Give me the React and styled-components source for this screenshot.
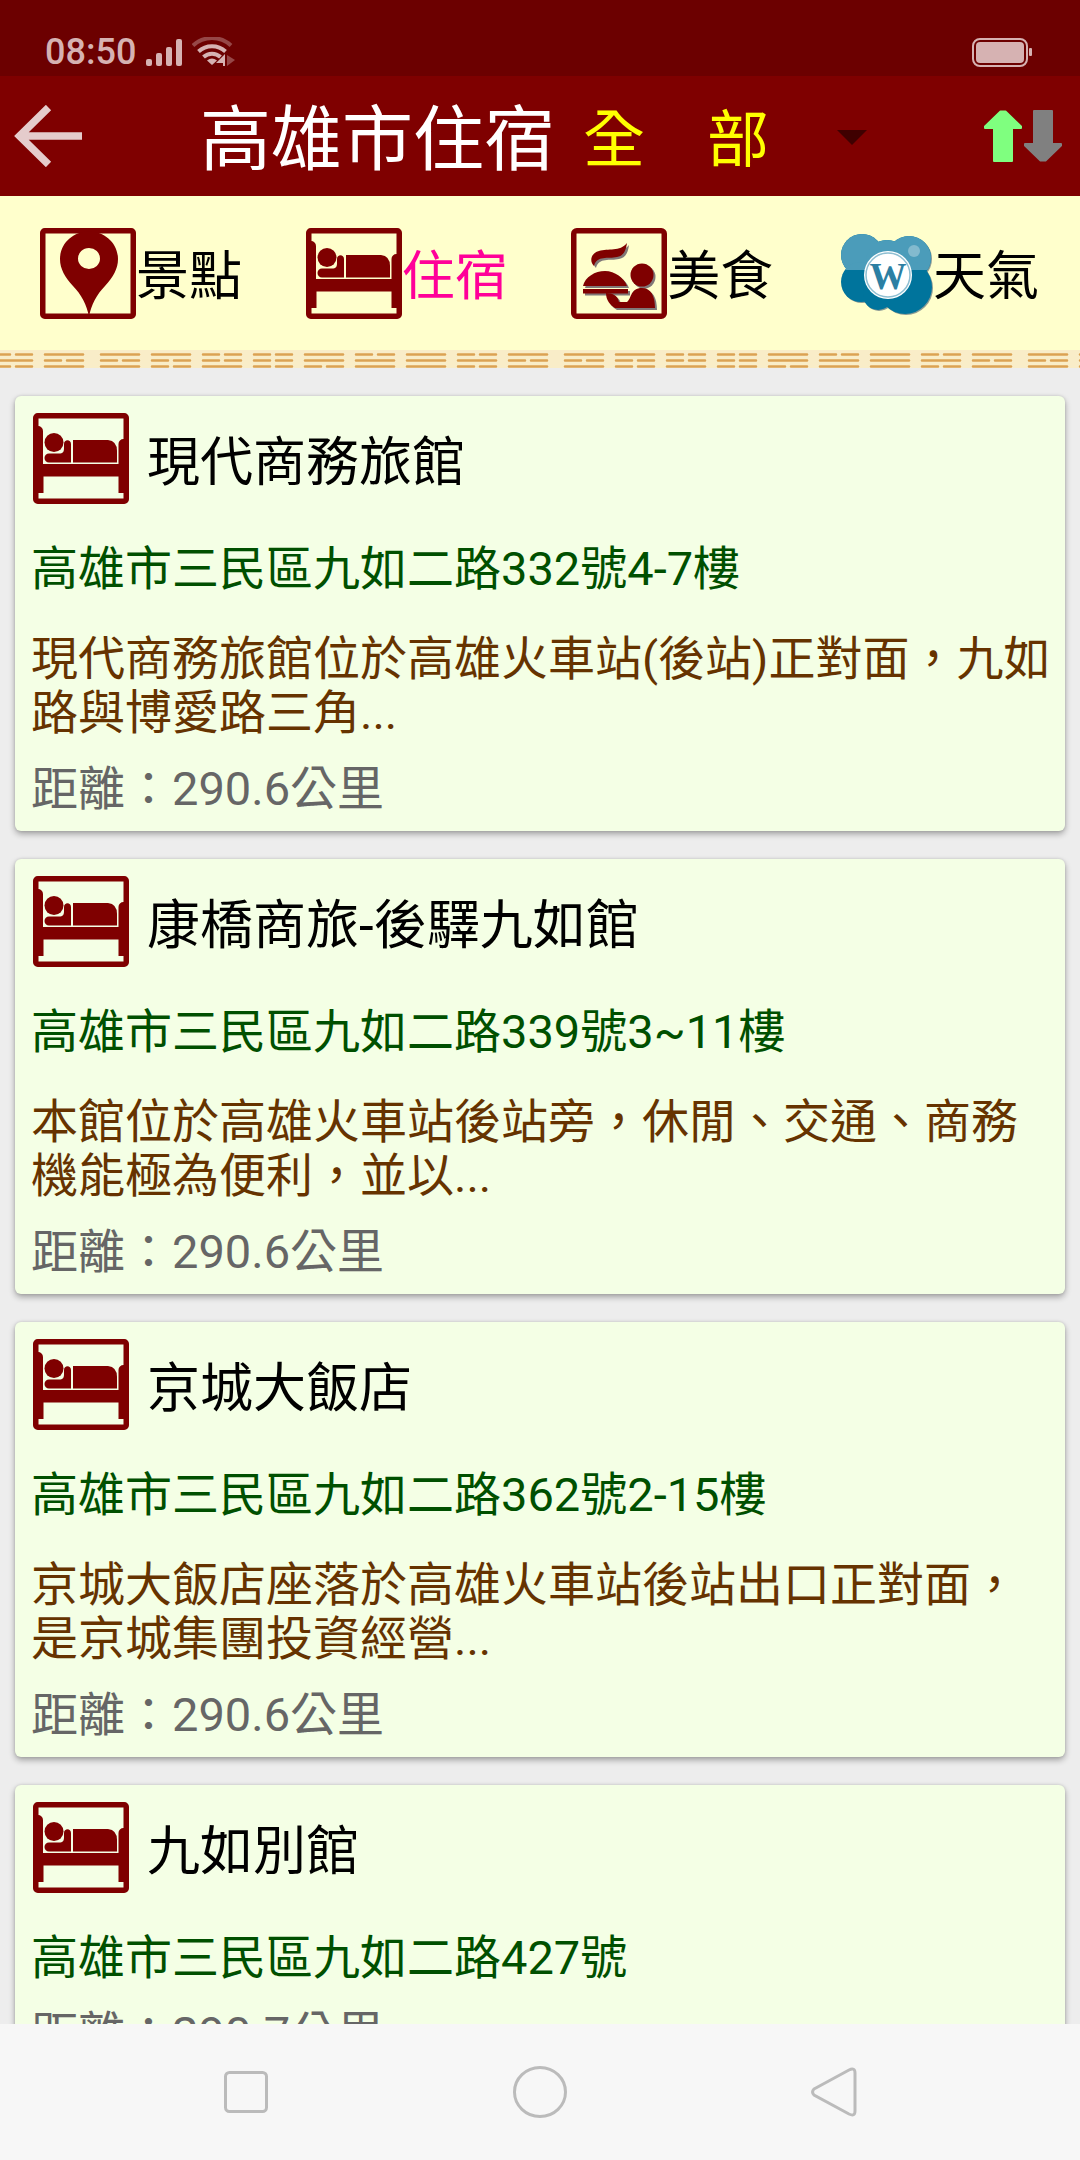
import React, { useState } from 'react';
import styled, { createGlobalStyle } from 'styled-components';

const GlobalStyle = createGlobalStyle`
  * {
    box-sizing: border-box;
  }

  body {
    margin: 0;
    background-color: #ededed;
    font-family: Roboto, 'Noto Sans CJK TC', sans-serif;
  }

  svg {
    display: block;
    flex-shrink: 0;
  }
`;

const Screen = styled.div`
  height: 100vh;
  display: flex;
  flex-direction: column;
`;

const StatusBar = styled.div`
  background-color: #6c0000;
  color: #d6b2b2;
  height: 76px;
  display: flex;
  justify-content: space-between;
  align-items: flex-end;
  padding: 0 48px 2px 45px;
`;

const StatusGroup = styled.div`
  display: flex;
  align-items: center;
  gap: 10px;
  height: 44px;
`;

const Clock = styled.span`
  font-size: 36px;
  font-weight: 500;
  line-height: 44px;
`;

const Toolbar = styled.header`
  background-color: #7f0000;
  color: #fff;
  height: 120px;
  display: flex;
  align-items: center;
  padding: 0 18px 0 14px;
`;

const IconButton = styled.button`
  background: none;
  border: none;
  padding: 0;
  cursor: pointer;
`;

const Title = styled.h1`
  font-size: 71px;
  font-weight: 400;
  line-height: 84px;
  margin: 0 28px 0 118px;
  padding-top: 8px;
`;

const AreaPicker = styled.div`
  position: relative;
  width: 284px;
`;

const AreaSelect = styled.select`
  appearance: none;
  background: none;
  border: none;
  outline: none;
  padding: 8px 0 0;
  width: 100%;
  height: 84px;
  color: #ffff00;
  font-family: inherit;
  font-size: 62px;

  option {
    background-color: #7f0000;
  }
`;

const Caret = styled.svg`
  position: absolute;
  right: 0;
  top: 36px;
  pointer-events: none;
`;

const SortButton = styled(IconButton)`
  display: flex;
  gap: 2px;
  margin-left: auto;
`;

const Nav = styled.nav`
  background-color: #ffffcc;
  height: 154px;
  display: flex;
  justify-content: space-between;
  align-items: center;
  padding: 0 41px 0 40px;
`;

const NavLink = styled.a`
  display: flex;
  align-items: center;
  color: ${props => (props.$active ? '#ff0099' : '#000')};
  font-size: 53px;
  line-height: 64px;
  text-decoration: none;
`;

const NavLabel = styled.span`
  padding-top: 8px;
`;

const HotelList = styled.main`
  flex: 1;
  min-height: 0;
  overflow-y: auto;
  scrollbar-width: none;
  display: flex;
  flex-direction: column;
  gap: 28px;
  padding: 28px 15px;
`;

const Card = styled.article`
  flex-shrink: 0;
  background-color: #f4ffe5;
  border-radius: 6px;
  box-shadow: 0 3px 6px rgba(0, 0, 0, 0.32), 0 0 3px rgba(0, 0, 0, 0.12);
  padding: 17px 14px 15px 16px;
`;

const CardHeader = styled.div`
  display: flex;
  align-items: center;
  gap: 18px;
  padding-left: 2px;
`;

const HotelName = styled.h2`
  margin: 0;
  padding-top: 8px;
  color: #000;
  font-size: 53px;
  font-weight: 400;
  line-height: 64px;
`;

const CardText = styled.p`
  margin: ${props => props.$gap}px 0 0;
  color: ${props => props.$color};
  font-size: 47px;
  line-height: 54px;
`;

const BottomBar = styled.footer`
  background-color: #f7f7f7;
  height: 136px;
  display: grid;
  grid-template-columns: repeat(3, 1fr);
  align-items: center;
  justify-items: center;
  padding: 0 99px;
`;

const SignalIcon = () => (
  <svg width="36" height="27" viewBox="0 0 36 27" fill="currentColor">
    <rect x="0" y="20" width="6" height="7" rx="2" />
    <rect x="10" y="14" width="6" height="13" rx="2" />
    <rect x="20" y="8" width="6" height="19" rx="2" />
    <rect x="30" y="0" width="6" height="27" rx="2" />
  </svg>
);

const WifiIcon = () => (
  <svg width="44" height="30" viewBox="0 0 44 30" fill="none" stroke="currentColor">
    <path d="M1 8.5a28 28 0 0 1 38 0" strokeWidth="4" opacity="0.4" />
    <path d="M6.5 14.5a20 20 0 0 1 27 0" strokeWidth="4" />
    <path d="M11.500 20a12.500 12.500 0 0 1 17 0" strokeWidth="4" />
    <path d="M15 23.500q5-4 10 0l-5 4.500z" fill="currentColor" stroke="none" />
    <path d="M33 17v12h-2v-3h-7z" fill="currentColor" stroke="none" />
    <path d="M35 18l8 5-8 6z" fill="currentColor" stroke="none" opacity="0.4" />
  </svg>
);

const BatteryIcon = () => (
  <svg width="60" height="29" viewBox="0 0 60 29" fill="none">
    <rect x="1" y="1" width="54" height="27" rx="7" stroke="currentColor" strokeWidth="2" />
    <rect x="4" y="4" width="48" height="21" rx="4" fill="currentColor" />
    <rect x="57" y="10" width="3" height="8" rx="1" fill="currentColor" />
  </svg>
);

const BackArrowIcon = () => (
  <svg width="68" height="62" viewBox="0 0 68 62" fill="none" stroke="#e5cccc" strokeWidth="7.500">
    <path d="M34.500 2.500L5.500 31l29 28.500M7 31h61" />
  </svg>
);

const ArrowIcon = ({ color, down }) => (
  <svg width="38" height="52" viewBox="0 0 38 52" fill={color} stroke={color} strokeWidth="2" strokeLinejoin="round">
    <path
      d="M16.500 1.500h5L37 16.500v1.500h-9v33H10V18H1v-1.500z"
      transform={down ? 'rotate(180 19 26)' : undefined}
    />
  </svg>
);

const PinIcon = () => (
  <svg width="96" height="91" viewBox="0 0 96 91">
    <rect x="2.750" y="2.750" width="90.500" height="85.500" rx="2" fill="none" stroke="#7f0000" strokeWidth="5.500" />
    <path
      fill="#7f0000"
      fillRule="evenodd"
      d="M49 3.500c16 0 29 12 29 27.500 0 10-5 18-13 27-8 8-14 19-16 31-2-12-8-23-16-31-8-9-13-17-13-27C20 15.500 33 3.500 49 3.500zM49 20a11 10.500 0 1 0 0 21 11 10.500 0 1 0 0-21z"
    />
  </svg>
);

const BedIcon = () => (
  <svg width="96" height="91" viewBox="0 0 96 91" fill="#7f0000">
    <rect x="2.750" y="2.750" width="90.500" height="85.500" rx="2" fill="none" stroke="#7f0000" strokeWidth="5.500" />
    <path d="M0 13h5a5 5 0 0 1 5 5v33h75.500V31a5 5 0 0 1 5-5H96v54H85.500V63.500H10.500V80H0z" />
    <circle cx="21" cy="29.500" r="9.500" />
    <path d="M38 49.500H16a4.500 4.500 0 0 1 0-9h10c4 0 5-2 5-5V31c0-5 7-5 7 0z" />
    <path d="M40 27h35q9 1 9 11v11.500H40z" />
  </svg>
);

const DiningShapes = () => (
  <>
    <path d="M23 38c-5-5-3-13 5-15 9-3 21 1 28-8-1 7-3 13-10 14-9 2-20-2-23 9z" />
    <path d="M12 58c2-9 12-15 22-15s19 7 22 15z" />
    <path d="M12 61h45v4.500H12z" />
    <circle cx="71" cy="47" r="11.500" />
    <path d="M35 65c7 0 12 3 13 9h8c5-4 3-14 15-14 9 0 13 8 13 20H44c-5-3-9-8-9-15z" />
  </>
);

const DiningIcon = () => (
  <svg width="96" height="91" viewBox="0 0 96 91">
    <rect x="2.750" y="2.750" width="90.500" height="85.500" rx="3" fill="none" stroke="#7f0000" strokeWidth="5.500" />
    <g fill="#807878" transform="translate(2 2)">
      <DiningShapes />
    </g>
    <g fill="#7f0000">
      <DiningShapes />
    </g>
  </svg>
);

const CloudShapes = () => (
  <>
    <circle cx="25" cy="27" r="21" />
    <circle cx="50" cy="33" r="21" />
    <circle cx="72" cy="30" r="22" />
    <circle cx="24" cy="54" r="20" />
    <circle cx="41" cy="67" r="15" />
    <circle cx="68" cy="59" r="27" />
  </>
);

const WeatherIcon = () => (
  <svg width="96" height="91" viewBox="0 0 96 91">
    <defs>
      <clipPath id="cloud-top">
        <rect width="96" height="42" />
      </clipPath>
    </defs>
    <g fill="#8d9b94" transform="translate(1 1)">
      <CloudShapes />
    </g>
    <g fill="#00749c">
      <CloudShapes />
    </g>
    <g fill="#4b9cba" clipPath="url(#cloud-top)">
      <CloudShapes />
    </g>
    <circle cx="77" cy="23" r="6" fill="#83bace" />
    <circle cx="51" cy="47" r="24" fill="#fff" />
    <circle cx="51" cy="47" r="22" fill="none" stroke="#8fbfd2" strokeWidth="1.500" />
    <text
      x="51"
      y="61"
      fill="#2b7fa3"
      fontFamily="'Liberation Serif', serif"
      fontSize="37"
      fontWeight="700"
      textAnchor="middle"
    >
      W
    </text>
  </svg>
);

// f = full dash, s = dash split in two, one letter for each of the three lines
const WEAVE = ['fsf', 'fss', 'ssf', 'sss', 'ffs', 'sff', 'fff', 'sfs', 'fsf'];

const WeaveBorder = () => (
  <svg width="100%" height="18">
    <defs>
      <pattern id="weave" x="99" width="464" height="18" patternUnits="userSpaceOnUse">
        {WEAVE.map((block, i) =>
          block.split('').map((line, j) => (
            <path
              key={`${i}-${j}`}
              d={`M${i * 51 + 2} ${4.5 + j * 6}${line === 'f' ? 'h38' : 'h16m6 0h16'}`}
              stroke="#dba253"
              strokeWidth="2.500"
              strokeLinecap="round"
            />
          ))
        )}
      </pattern>
    </defs>
    <rect width="100%" height="18" fill="#f9edc8" />
    <rect width="100%" height="18" fill="url(#weave)" />
  </svg>
);

const navItems = [
  { label: '景點', Icon: PinIcon },
  { label: '住宿', Icon: BedIcon },
  { label: '美食', Icon: DiningIcon },
  { label: '天氣', Icon: WeatherIcon },
];

const hotels = [
  {
    name: '現代商務旅館',
    address: '高雄市三民區九如二路332號4-7樓',
    description: '現代商務旅館位於高雄火車站(後站)正對面，九如路與博愛路三角...',
    distance: '290.6',
  },
  {
    name: '康橋商旅-後驛九如館',
    address: '高雄市三民區九如二路339號3~11樓',
    description: '本館位於高雄火車站後站旁，休閒、交通、商務機能極為便利，並以...',
    distance: '290.6',
  },
  {
    name: '京城大飯店',
    address: '高雄市三民區九如二路362號2-15樓',
    description: '京城大飯店座落於高雄火車站後站出口正對面，是京城集團投資經營...',
    distance: '290.6',
  },
  {
    name: '九如別館',
    address: '高雄市三民區九如二路427號',
    distance: '290.7',
  },
];

const App = () => {
  const [active, setActive] = useState('住宿');
  const [ascending, setAscending] = useState(true);

  return (
    <Screen lang="zh-Hant">
      <GlobalStyle />
      <StatusBar>
        <StatusGroup>
          <Clock>08:50</Clock>
          <SignalIcon />
          <WifiIcon />
        </StatusGroup>
        <StatusGroup>
          <BatteryIcon />
        </StatusGroup>
      </StatusBar>
      <Toolbar>
        <IconButton aria-label="返回">
          <BackArrowIcon />
        </IconButton>
        <Title>高雄市住宿</Title>
        <AreaPicker>
          <AreaSelect aria-label="地區" defaultValue="all">
            <option value="all">全　部</option>
          </AreaSelect>
          <Caret width="30" height="15" viewBox="0 0 30 15">
            <path d="M0 0h30L15 15z" fill="#3f0000" />
          </Caret>
        </AreaPicker>
        <SortButton aria-label="排序" onClick={() => setAscending(!ascending)}>
          <ArrowIcon color={ascending ? '#7fff7f' : '#808080'} />
          <ArrowIcon color={ascending ? '#808080' : '#7fff7f'} down />
        </SortButton>
      </Toolbar>
      <Nav>
        {navItems.map(({ label, Icon }) => (
          <NavLink key={label} href="#" $active={label === active} onClick={() => setActive(label)}>
            <Icon />
            <NavLabel>{label}</NavLabel>
          </NavLink>
        ))}
      </Nav>
      <WeaveBorder />
      <HotelList>
        {hotels.map(hotel => (
          <Card key={hotel.name}>
            <CardHeader>
              <BedIcon />
              <HotelName>{hotel.name}</HotelName>
            </CardHeader>
            <CardText $gap={38} $color="#005000">{hotel.address}</CardText>
            {hotel.description && (
              <CardText $gap={36} $color="#663300">{hotel.description}</CardText>
            )}
            <CardText $gap={22} $color="#666">距離：{hotel.distance}公里</CardText>
          </Card>
        ))}
      </HotelList>
      <BottomBar>
        <IconButton aria-label="最近">
          <svg width="44" height="42" viewBox="0 0 44 42">
            <rect x="1.500" y="1.500" width="41" height="39" rx="4" fill="none" stroke="#bbb" strokeWidth="3" />
          </svg>
        </IconButton>
        <IconButton aria-label="主畫面">
          <svg width="54" height="52" viewBox="0 0 54 52">
            <ellipse cx="27" cy="26" rx="25.500" ry="24.500" fill="none" stroke="#bbb" strokeWidth="3" />
          </svg>
        </IconButton>
        <IconButton aria-label="上一頁">
          <svg width="46" height="50" viewBox="0 0 46 50">
            <path
              d="M3 22L38 3q6-3 6 3v38q0 6-6 3L3 28q-3-3 0-6z"
              fill="none"
              stroke="#bbb"
              strokeWidth="3"
            />
          </svg>
        </IconButton>
      </BottomBar>
    </Screen>
  );
};

export default App;
